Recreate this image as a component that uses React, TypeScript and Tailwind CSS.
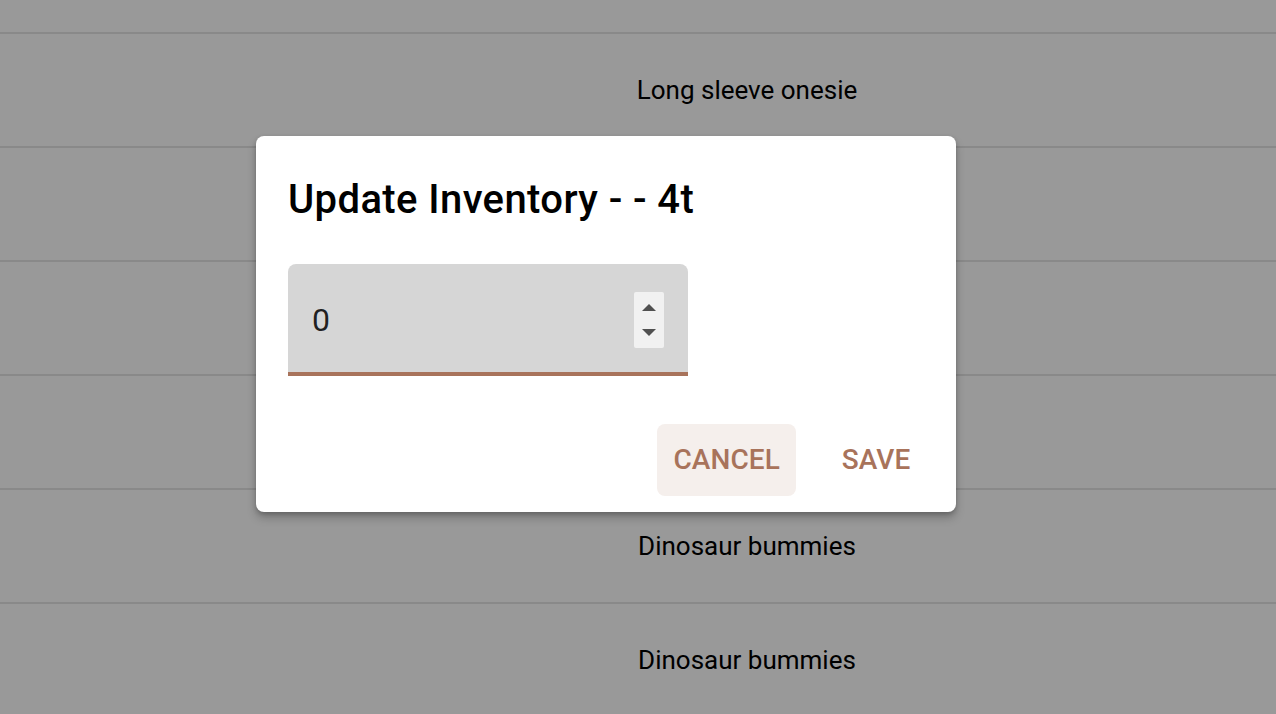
const rows = ['Long sleeve onesie', '', '', '', 'Dinosaur bummies', 'Dinosaur bummies'];

function Spinner() {
  return (
    <div className="mt-1 flex h-[56px] w-[30px] flex-col items-center justify-center gap-[18px] rounded-[2px] bg-[#f1f1f1]">
      <svg width="14" height="7" viewBox="0 0 14 7"><path d="M7 0 L14 7 L0 7 Z" fill="#505050" /></svg>
      <svg width="14" height="7" viewBox="0 0 14 7"><path d="M0 0 L14 0 L7 7 Z" fill="#505050" /></svg>
    </div>
  );
}

export default function App() {
  return (
    <div className="relative h-[714px] w-[1276px] overflow-hidden bg-white" style={{ fontFamily: 'Roboto, "Liberation Sans", sans-serif' }}>
      <div className="flex flex-col">
        <div className="h-[32px]" />
        {rows.map((label, i) => (
          <div key={i} className="flex h-[114px] items-center justify-center border-t-2 border-[#e4e4e4] pl-[218px] text-[26px] text-black">
            {label}
          </div>
        ))}
      </div>

      <div className="absolute inset-0 bg-black/40" />

      <div className="absolute left-[256px] top-[136px] flex w-[700px] flex-col rounded-[8px] bg-white shadow-[0_6px_10px_rgba(0,0,0,0.22),0_2px_4px_rgba(0,0,0,0.18)]">
        <h2 className="px-8 pt-8 text-[40px] font-medium leading-[64px] tracking-[0.4px] text-black">
          Update Inventory - - 4t
        </h2>
        <div className="px-8 pt-8 pb-8">
          <div className="flex h-[112px] w-[400px] items-center justify-between rounded-t-[8px] border-b-4 border-[#a8735b] bg-[#d6d6d6] pl-6 pr-6">
            <span className="pt-1 text-[32px] text-black/85">0</span>
            <Spinner />
          </div>
        </div>
        <div className="flex items-center justify-end gap-4 p-4">
          <button className="h-[72px] min-w-[128px] rounded-[8px] bg-[#f5efec] px-4 text-[28px] font-medium uppercase tracking-[0.1px] text-[#a8735b]">
            Cancel
          </button>
          <button className="h-[72px] min-w-[128px] rounded-[8px] px-4 text-[28px] font-medium uppercase tracking-[0.1px] text-[#a8735b]">
            Save
          </button>
        </div>
      </div>
    </div>
  );
}
